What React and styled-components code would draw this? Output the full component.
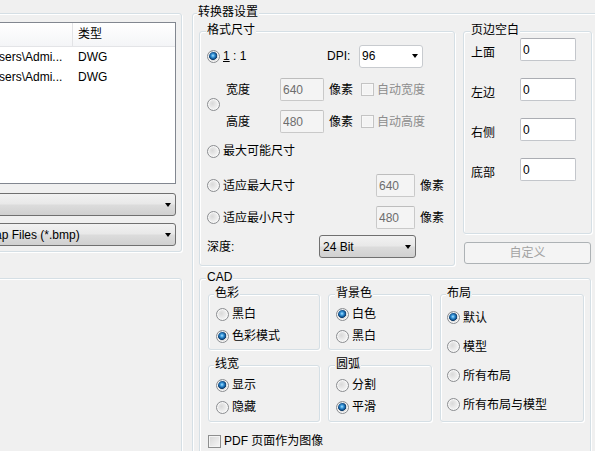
import React from "react";
import styled, { createGlobalStyle } from "styled-components";

const GlobalStyle = createGlobalStyle`
  html, body {
    margin: 0;
    padding: 0;
    background: #f0f0f0;
  }
  body {
    font-family: "Liberation Sans", "Noto Sans CJK SC", sans-serif;
    font-size: 12px;
    color: #000;
    overflow: hidden;
  }
`;

const Window = styled.div`
  display: flex;
  width: 595px;
  height: 451px;
  overflow: hidden;
  background: #f0f0f0;
`;

// ---------- shared controls ----------

const GroupBox = styled.div`
  position: relative;
  box-sizing: border-box;
  flex: none;
  border: 1px solid #d5dfe5;
  border-radius: 3px;
  box-shadow: inset 1px 1px 0 #fff, 1px 1px 0 #fff;
`;

const GroupTitle = styled.span`
  position: absolute;
  top: -10px;
  left: ${(p) => p.$left ?? 6}px;
  padding: 0 1px;
  background: #f0f0f0;
  line-height: 16px;
  white-space: nowrap;
`;

const Radio = styled.span`
  flex: none;
  box-sizing: border-box;
  width: 13px;
  height: 13px;
  border-radius: 50%;
  border: 1px solid #8b8d90;
  box-shadow: inset 0 0 0 1px #f8f8f8;
  background: ${(p) =>
    p.$checked
      ? "radial-gradient(circle at 45% 42%, #b4e4fb 0, #3f9fe2 1.5px, #17609f 3px, #0e3d6c 4px, #d8d8d8 4.6px, #f7f7f7 100%)"
      : "radial-gradient(circle at 40% 40%, #d9d9d9 0, #ebebeb 45%, #fdfdfd 100%)"};
`;

const CheckBox = styled.span`
  flex: none;
  box-sizing: border-box;
  width: 13px;
  height: 13px;
  margin-left: ${(p) => p.$ml ?? 0}px;
  border: 1px solid ${(p) => (p.$disabled ? "#c4c4c4" : "#8e8f8f")};
  box-shadow: inset 0 0 0 1px ${(p) => (p.$disabled ? "#f8f8f8" : "#f4f4f4")};
  background: ${(p) =>
    p.$disabled ? "#f4f4f4" : "linear-gradient(135deg, #d6d6d6, #f7f7f7)"};
`;

const Combo = styled.div`
  flex: none;
  display: flex;
  align-items: center;
  box-sizing: border-box;
  width: ${(p) => (p.$w ? `${p.$w}px` : "auto")};
  height: 23px;
  padding-left: ${(p) => p.$pad ?? 3}px;
  border: 1px solid ${(p) => (p.$plain ? "#c8cbcf" : "#707070")};
  border-radius: 3px;
  background: ${(p) =>
    p.$plain
      ? "#fff"
      : "linear-gradient(#f2f2f2 0%, #e8e8e8 48%, #dcdcdc 52%, #d0d0d0 100%)"};
  line-height: 16px;
  white-space: nowrap;
  overflow: hidden;
`;

const ComboText = styled.span`
  flex: 1;
  overflow: hidden;
`;

const Arrow = styled.span`
  flex: none;
  margin-right: ${(p) => p.$mr ?? 4}px;
  width: 0;
  height: 0;
  border-left: 3.5px solid transparent;
  border-right: 3.5px solid transparent;
  border-top: 4px solid #000;
`;

const TextBox = styled.input`
  flex: none;
  box-sizing: border-box;
  width: ${(p) => p.$w}px;
  height: 23px;
  margin: 0;
  padding: 0 2px;
  border: 1px solid ${(p) => (p.disabled ? "#c9c9c9" : "#c3c6cb")};
  border-top-color: ${(p) => (p.disabled ? "#bdbdbd" : "#abadb3")};
  border-radius: 2px;
  background: ${(p) => (p.disabled ? "#f4f4f4" : "#fff")};
  color: ${(p) => (p.disabled ? "#6d6d6d" : "#000")};
  font: inherit;
  line-height: 16px;
  outline: none;
`;

const Label = styled.span`
  flex: none;
  width: ${(p) => (p.$w ? `${p.$w}px` : "auto")};
  margin-left: ${(p) => p.$ml ?? 0}px;
  color: ${(p) => (p.$disabled ? "#8d8d8d" : "#000")};
  line-height: 16px;
  white-space: nowrap;
`;

// ---------- left panel (file list) ----------

const LeftColumn = styled.div`
  flex: none;
  width: 222px;
  margin-left: -40px;
  display: flex;
  flex-direction: column;
`;

const FilesGroup = styled(GroupBox)`
  margin-top: 13px;
  padding: 8px 5px 5px 6px;
`;

const LowerGroup = styled(GroupBox)`
  margin-top: 26px;
  height: 300px;
`;

const FileList = styled.div`
  box-sizing: border-box;
  height: 162px;
  border: 1px solid #828790;
  background: #fff;
`;

const ListHeader = styled.div`
  display: flex;
  height: 24px;
  box-sizing: border-box;
  border-bottom: 1px solid #e3e4e7;
  background: linear-gradient(#ffffff, #f4f5f7);
`;

const HeaderCell = styled.div`
  box-sizing: border-box;
  width: ${(p) => (p.$w ? `${p.$w}px` : "auto")};
  flex: ${(p) => (p.$w ? "none" : "1")};
  padding-left: ${(p) => p.$pad}px;
  line-height: 23px;
  border-right: ${(p) => (p.$w ? "1px solid #e2e3e6" : "none")};
`;

const ListRow = styled.div`
  display: flex;
  height: 20px;
  line-height: 20px;
`;

const ListCell = styled.div`
  box-sizing: border-box;
  width: ${(p) => (p.$w ? `${p.$w}px` : "auto")};
  flex: ${(p) => (p.$w ? "none" : "1")};
  padding-left: ${(p) => p.$pad}px;
  white-space: nowrap;
  overflow: hidden;
`;

const FileCombo = styled(Combo)`
  margin-top: ${(p) => p.$mt}px;
`;

// ---------- right panel (converter settings) ----------

const RightColumn = styled.div`
  flex: none;
  margin-left: 10px;
`;

const ConverterGroup = styled(GroupBox)`
  margin-top: 13px;
  width: 440px;
  height: 480px;
  padding: 17px 0 0 6px;
`;

const TopRow = styled.div`
  display: flex;
  align-items: flex-start;
  gap: 8px;
`;

const FormatGroup = styled(GroupBox)`
  width: 256px;
  height: 235px;
  padding: 12px 0 0 7px;
`;

const FormRow = styled.div`
  display: flex;
  align-items: center;
  height: ${(p) => p.$h ?? 23}px;
  margin-top: ${(p) => p.$mt ?? 0}px;
`;

const OptionCell = styled.div`
  flex: none;
  display: flex;
  align-items: center;
  width: ${(p) => p.$w}px;
`;

const SizeBlock = styled.div`
  display: flex;
  margin-top: 10px;
`;

const SizeRadio = styled(Radio)`
  margin-top: 20px;
`;

const SizeFields = styled.div`
  display: flex;
  flex-direction: column;
  gap: 9px;
  margin-left: 6px;
`;

const SideStack = styled.div`
  flex: none;
  width: 129px;
  display: flex;
  flex-direction: column;
`;

const MarginGroup = styled(GroupBox)`
  height: 203px;
  padding: 6px 0 0 7px;
  display: flex;
  flex-direction: column;
  gap: 17px;
`;

const MarginRow = styled.div`
  display: flex;
  height: 23px;
`;

const MarginLabel = styled.span`
  flex: none;
  width: 49px;
  padding-top: 7px;
  line-height: 16px;
`;

const CustomButton = styled.button`
  box-sizing: border-box;
  width: 127px;
  height: 22px;
  margin: 8px 0 0 1px;
  padding: 0;
  border: 1px solid #adb2b5;
  border-radius: 3px;
  background: #f4f4f4;
  color: #a3a3a3;
  font: inherit;
  line-height: 16px;
`;

const CadGroup = styled(GroupBox)`
  margin-top: 12px;
  width: 392px;
  height: 220px;
  padding: 15px 0 0 8px;
`;

const CadGrid = styled.div`
  display: grid;
  grid-template-columns: 112px 104px 144px;
  grid-template-rows: 56px 57px;
  column-gap: 8px;
  row-gap: 15px;
`;

const SubGroup = styled(GroupBox)`
  padding: 8px 0 0 ${(p) => p.$pl ?? 7}px;
  grid-column: ${(p) => p.$col};
  grid-row: ${(p) => p.$row};
`;

const OptionRow = styled.div`
  display: flex;
  align-items: center;
  height: ${(p) => p.$h ?? 22}px;
`;

const PdfRow = styled.div`
  display: flex;
  align-items: center;
  height: 14px;
  margin-top: 12px;
`;

function Option({ checked, children, h }) {
  return (
    <OptionRow $h={h}>
      <Radio $checked={checked} />
      <Label $ml={3}>{children}</Label>
    </OptionRow>
  );
}

const margins = ["上面", "左边", "右侧", "底部"];

export default function App() {
  return (
    <>
      <GlobalStyle />
      <Window>
        <LeftColumn>
          <FilesGroup>
            <FileList>
              <ListHeader>
                <HeaderCell $w={105} $pad={7} />
                <HeaderCell $pad={5}>类型</HeaderCell>
              </ListHeader>
              <ListRow>
                <ListCell $w={105} $pad={7}>C:\Users\Admi...</ListCell>
                <ListCell $pad={5}>DWG</ListCell>
              </ListRow>
              <ListRow>
                <ListCell $w={105} $pad={7}>C:\Users\Admi...</ListCell>
                <ListCell $pad={5}>DWG</ListCell>
              </ListRow>
            </FileList>
            <FileCombo $mt={9}>
              <ComboText />
              <Arrow />
            </FileCombo>
            <FileCombo $mt={7} $pad={3}>
              <ComboText>Bitmap Files (*.bmp)</ComboText>
              <Arrow />
            </FileCombo>
          </FilesGroup>
          <LowerGroup />
        </LeftColumn>

        <RightColumn>
          <ConverterGroup>
            <GroupTitle $left={4}>转换器设置</GroupTitle>
            <TopRow>
              <FormatGroup>
                <GroupTitle>格式尺寸</GroupTitle>
                <FormRow $h={24}>
                  <OptionCell $w={120}>
                    <Radio $checked />
                    <Label $ml={3}>
                      <u>1</u> : 1
                    </Label>
                  </OptionCell>
                  <Label $w={32}>DPI:</Label>
                  <Combo $plain $w={64} $pad={2}>
                    <ComboText>96</ComboText>
                    <Arrow />
                  </Combo>
                </FormRow>

                <SizeBlock>
                  <SizeRadio />
                  <SizeFields>
                    <FormRow>
                      <Label $w={54}>宽度</Label>
                      <TextBox $w={44} disabled readOnly value="640" />
                      <Label $ml={5}>像素</Label>
                      <CheckBox $disabled $ml={8} />
                      <Label $ml={3} $disabled>自动宽度</Label>
                    </FormRow>
                    <FormRow>
                      <Label $w={54}>高度</Label>
                      <TextBox $w={44} disabled readOnly value="480" />
                      <Label $ml={5}>像素</Label>
                      <CheckBox $disabled $ml={8} />
                      <Label $ml={3} $disabled>自动高度</Label>
                    </FormRow>
                  </SizeFields>
                </SizeBlock>

                <FormRow $h={22} $mt={7}>
                  <Radio />
                  <Label $ml={3}>最大可能尺寸</Label>
                </FormRow>

                <FormRow $mt={12}>
                  <OptionCell $w={169}>
                    <Radio />
                    <Label $ml={3}>适应最大尺寸</Label>
                  </OptionCell>
                  <TextBox $w={39} disabled readOnly value="640" />
                  <Label $ml={5}>像素</Label>
                </FormRow>

                <FormRow $mt={9}>
                  <OptionCell $w={169}>
                    <Radio />
                    <Label $ml={3}>适应最小尺寸</Label>
                  </OptionCell>
                  <TextBox $w={39} disabled readOnly value="480" />
                  <Label $ml={5}>像素</Label>
                </FormRow>

                <FormRow $mt={6}>
                  <Label $w={112}>深度:</Label>
                  <Combo $w={97} $pad={3}>
                    <ComboText>24 Bit</ComboText>
                    <Arrow $mr={4} />
                  </Combo>
                </FormRow>
              </FormatGroup>

              <SideStack>
                <MarginGroup>
                  <GroupTitle>页边空白</GroupTitle>
                  {margins.map((m) => (
                    <MarginRow key={m}>
                      <MarginLabel>{m}</MarginLabel>
                      <TextBox $w={56} readOnly value="0" />
                    </MarginRow>
                  ))}
                </MarginGroup>
                <CustomButton disabled>自定义</CustomButton>
              </SideStack>
            </TopRow>

            <CadGroup>
              <GroupTitle>CAD</GroupTitle>
              <CadGrid>
                <SubGroup $col="1" $row="1">
                  <GroupTitle $left={5}>色彩</GroupTitle>
                  <Option>黑白</Option>
                  <Option checked>色彩模式</Option>
                </SubGroup>
                <SubGroup $col="2" $row="1">
                  <GroupTitle>背景色</GroupTitle>
                  <Option checked>白色</Option>
                  <Option>黑白</Option>
                </SubGroup>
                <SubGroup $col="3" $row="1 / span 2" $pl={6}>
                  <GroupTitle $left={5}>布局</GroupTitle>
                  <Option checked h={29}>默认</Option>
                  <Option h={29}>模型</Option>
                  <Option h={29}>所有布局</Option>
                  <Option h={29}>所有布局与模型</Option>
                </SubGroup>
                <SubGroup $col="1" $row="2">
                  <GroupTitle $left={5}>线宽</GroupTitle>
                  <Option checked>显示</Option>
                  <Option>隐藏</Option>
                </SubGroup>
                <SubGroup $col="2" $row="2">
                  <GroupTitle>圆弧</GroupTitle>
                  <Option>分割</Option>
                  <Option checked>平滑</Option>
                </SubGroup>
              </CadGrid>
              <PdfRow>
                <CheckBox />
                <Label $ml={3}>PDF 页面作为图像</Label>
              </PdfRow>
            </CadGroup>
          </ConverterGroup>
        </RightColumn>
      </Window>
    </>
  );
}
